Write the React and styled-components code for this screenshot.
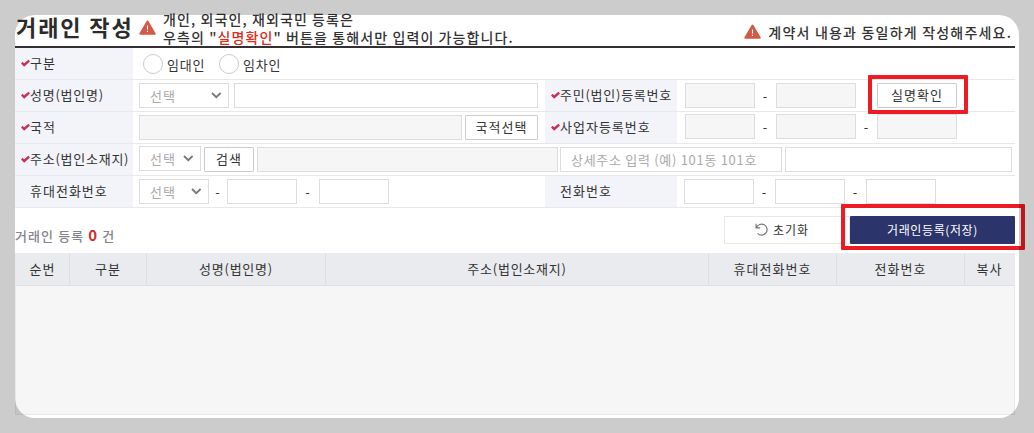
import React from "react";
import styled, { createGlobalStyle } from "styled-components";

const GlobalStyle = createGlobalStyle`
  * {
    box-sizing: border-box;
  }
  body {
    margin: 0;
    background: #fff;
    color: #333;
    font-family: "Noto Sans CJK KR", "Noto Sans", sans-serif;
    font-size: 13px;
    letter-spacing: 1px;
    overflow: hidden;
  }
  button, input {
    font: inherit;
    letter-spacing: inherit;
    color: inherit;
  }
`;

const Page = styled.div`
  position: relative;
  width: 1034px;
  height: 433px;
  padding: 0 19px 0 15px;
  overflow: hidden;
`;

const Header = styled.div`
  display: flex;
  height: 48px;
  border-bottom: 2px solid #332f33;
  white-space: nowrap;
`;

const Title = styled.h1`
  margin: 9px 0 0 1px;
  width: 123px;
  font-size: 22px;
  line-height: 34px;
  font-weight: 700;
  letter-spacing: 1.9px;
  color: #2b2b2b;
`;

const WarningMark = styled.svg`
  flex: none;
  width: 17px;
  height: 16px;
  margin-top: ${(props) => props.$top}px;
`;

const Notice = styled.div`
  margin: ${(props) => props.$top}px 0 0 7px;
  font-size: 14px;
  line-height: 18px;
  font-weight: 500;
  letter-spacing: ${(props) => props.$spacing}px;
`;

const RightNotice = styled.div`
  display: flex;
  margin-left: auto;
  padding-right: 3px;
`;

const Red = styled.span`
  color: #e02b20;
`;

const FormRow = styled.div`
  display: flex;
  height: 32px;
  border-bottom: 1px solid #e8e8ea;
`;

const Label = styled.div`
  flex: none;
  display: flex;
  align-items: center;
  width: ${(props) => props.$width || 118}px;
  padding-bottom: 2px;
  padding-left: ${(props) => (props.$required ? 6 : 15)}px;
  background: #f3f4f9;
  letter-spacing: ${(props) => (props.$tight ? 0.75 : 1)}px;
  white-space: nowrap;
`;

const CheckMark = styled.svg`
  width: 9px;
  height: 8px;
  flex: none;
`;

const Fields = styled.div`
  display: flex;
  align-items: flex-start;
  width: ${(props) => (props.$width ? `${props.$width}px` : "auto")};
  padding: ${(props) => props.$top || 3}px 0 0 ${(props) => props.$left || 6}px;
`;

const Input = styled.input`
  flex: none;
  width: ${(props) => props.$width}px;
  height: 25px;
  margin-left: ${(props) => props.$gap || 0}px;
  padding: 0 10px 1px;
  border: 1px solid #ddd;
  border-radius: 0;
  background: ${(props) => (props.readOnly ? "#f6f6f6" : "#fff")};
  letter-spacing: 0.7px;
  outline: none;
  &::placeholder {
    color: #aaa;
    opacity: 1;
  }
`;

const SelectBox = styled.div`
  flex: none;
  display: flex;
  align-items: center;
  justify-content: space-between;
  width: ${(props) => props.$width}px;
  height: 25px;
  padding: 0 6px 1px 10px;
  border: 1px solid #ddd;
  color: #aaa;
`;

const Button = styled.button`
  flex: none;
  width: ${(props) => props.$width}px;
  height: 25px;
  margin: ${(props) => props.$top || 0}px 0 0 ${(props) => props.$gap || 0}px;
  padding: 0 0 2px;
  border: 1px solid #ccc;
  border-radius: 1px;
  background: #fff;
`;

const Dash = styled.span`
  width: ${(props) => props.$width || 21}px;
  line-height: 26px;
  text-align: center;
`;

const Radio = styled.label`
  display: flex;
  align-items: center;
  width: 76px;
  height: 26px;
  padding-bottom: 2px;
  white-space: nowrap;
  letter-spacing: 0.8px;
  &::before {
    content: "";
    width: 18px;
    height: 18px;
    margin: 0 4px 0 0;
    border: 1px solid #ccc;
    border-radius: 50%;
  }
`;

const ListBar = styled.div`
  display: flex;
  height: 45px;
  padding-top: 8px;
`;

const Count = styled.div`
  margin-top: 8px;
  line-height: 22px;
  color: #85858d;
  font-weight: 500;
  letter-spacing: 1.1px;
  b {
    color: #d02c2c;
    font-size: 15px;
  }
`;

const ResetButton = styled.button`
  display: flex;
  align-items: center;
  justify-content: center;
  gap: 5px;
  width: 126px;
  height: 28px;
  margin-left: auto;
  padding: 0 10px 1px 0;
  border: 1px solid #e8e8e8;
  background: #fff;
  font-size: 12px;
`;

const SaveButton = styled.button`
  width: 165px;
  height: 28px;
  padding: 0 0 2px;
  border: 0;
  border-radius: 1px;
  background: #2b346b;
  color: #fff;
  font-size: 12px;
  letter-spacing: 0.6px;
`;

const Grid = styled.div`
  height: 162px;
  border: 1px solid #e8e9ec;
  border-top: 0;
  background: #f6f6f6;
`;

const GridHead = styled.div`
  display: grid;
  grid-template-columns: 54px 77px 179px 383px 128px 128px 49px;
  height: 33px;
  background: #e9ebef;
  border-bottom: 1px solid #dddfe5;
`;

const HeadCell = styled.div`
  display: flex;
  align-items: center;
  justify-content: center;
  padding-bottom: 1px;
  border-right: 1px solid #dddfe5;
  letter-spacing: ${(props) => (props.$tight ? 0.75 : 1)}px;
  &:last-child {
    border-right: 0;
  }
`;

const Highlight = styled.div`
  position: absolute;
  left: ${(props) => props.$x}px;
  top: ${(props) => props.$y}px;
  width: ${(props) => props.$width}px;
  height: ${(props) => props.$height}px;
  border: 4px solid #ed1c24;
  border-radius: 1px;
  pointer-events: none;
`;

// Dims everything around the rounded area
const Spotlight = styled.div`
  position: absolute;
  left: 15px;
  top: 15px;
  width: 1004px;
  height: 403px;
  border-radius: 20px;
  box-shadow: 0 0 0 60px rgba(0, 0, 0, 0.2);
  pointer-events: none;
`;

const columns = ["순번", "구분", "성명(법인명)", "주소(법인소재지)", "휴대전화번호", "전화번호", "복사"];

const Warning = ({ top }) => (
  <WarningMark $top={top} viewBox="0 0 17 16">
    <path d="M8.5 1.5 15.7 13.8H1.3Z" fill="#d15b47" stroke="#d15b47" strokeWidth="2" strokeLinejoin="round" />
    <path d="M8.5 5.5v4M8.5 10.7v1.3" stroke="#fff" strokeWidth="1.1" />
  </WarningMark>
);

const FieldLabel = ({ required, tight, width, children }) => (
  <Label $required={required} $tight={tight} $width={width}>
    {required && (
      <CheckMark viewBox="0 0 9 8">
        <path d="M.8 3.6 3.2 6 8.2 1.6" fill="none" stroke="#cf2c57" strokeWidth="2.4" />
      </CheckMark>
    )}
    {children}
  </Label>
);

const Select = ({ width }) => (
  <SelectBox $width={width}>
    선택
    <svg width="11" height="7" viewBox="0 0 11 7">
      <path d="M1 1 5.3 5.2 9.6 1" fill="none" stroke="#777" strokeWidth="1.8" />
    </svg>
  </SelectBox>
);

const App = () => {
  return (
    <Page>
      <GlobalStyle />
      <Header>
        <Title>거래인 작성</Title>
        <Warning top={20} />
        <Notice $top={10} $spacing={1.1}>
          개인, 외국인, 재외국민 등록은
          <br />
          우측의 "<Red>실명확인</Red>" 버튼을 통해서만 입력이 가능합니다.
        </Notice>
        <RightNotice>
          <Warning top={24} />
          <Notice $top={23} $spacing={1.2}>계약서 내용과 동일하게 작성해주세요.</Notice>
        </RightNotice>
      </Header>

      <FormRow>
        <FieldLabel required>구분</FieldLabel>
        <Fields $left={10} $top={4}>
          <Radio>임대인</Radio>
          <Radio>임차인</Radio>
        </Fields>
      </FormRow>
      <FormRow>
        <FieldLabel required tight>성명(법인명)</FieldLabel>
        <Fields $width={412}>
          <Select width={90} />
          <Input $width={304} $gap={5} />
        </Fields>
        <FieldLabel required tight width={132}>주민(법인)등록번호</FieldLabel>
        <Fields $left={8}>
          <Input $width={70} readOnly />
          <Dash>-</Dash>
          <Input $width={80} readOnly />
          <Button $width={80} $gap={21}>실명확인</Button>
        </Fields>
      </FormRow>
      <FormRow>
        <FieldLabel required>국적</FieldLabel>
        <Fields $width={412}>
          <Input $width={323} readOnly />
          <Button $width={73} $gap={3}>국적선택</Button>
        </Fields>
        <FieldLabel required width={132}>사업자등록번호</FieldLabel>
        <Fields $left={8} $top={2}>
          <Input $width={70} readOnly />
          <Dash>-</Dash>
          <Input $width={80} readOnly />
          <Dash>-</Dash>
          <Input $width={80} readOnly />
        </Fields>
      </FormRow>
      <FormRow>
        <FieldLabel required tight>주소(법인소재지)</FieldLabel>
        <Fields $top={2}>
          <Select width={62} />
          <Button $width={50} $gap={3} $top={1}>검색</Button>
        </Fields>
        <Fields $left={3}>
          <Input $width={301} readOnly />
          <Input $width={222} $gap={2} placeholder="상세주소 입력 (예) 101동 101호" />
          <Input $width={227} $gap={3} />
        </Fields>
      </FormRow>
      <FormRow>
        <FieldLabel>휴대전화번호</FieldLabel>
        <Fields $width={412}>
          <Select width={70} />
          <Dash $width={18}>-</Dash>
          <Input $width={70} />
          <Dash $width={22}>-</Dash>
          <Input $width={70} />
        </Fields>
        <FieldLabel width={132}>전화번호</FieldLabel>
        <Fields $left={7}>
          <Input $width={70} />
          <Dash>-</Dash>
          <Input $width={70} />
          <Dash>-</Dash>
          <Input $width={70} />
        </Fields>
      </FormRow>

      <ListBar>
        <Count>
          거래인 등록 <b>0</b> 건
        </Count>
        <ResetButton>
          <svg width="13" height="13" viewBox="0 0 13 13" fill="none" stroke="#777" strokeWidth="1.2">
            <path d="M1.1 .8v4.1h4.1M1.4 4.7A5.5 5.5 0 1 1 2.6 10.4" />
          </svg>
          초기화
        </ResetButton>
        <SaveButton>거래인등록(저장)</SaveButton>
      </ListBar>

      <Grid>
        <GridHead>
          {columns.map((name, i) => (
            <HeadCell key={i} $tight={name.includes("(")}>{name}</HeadCell>
          ))}
        </GridHead>
      </Grid>

      <Highlight $x={868} $y={75} $width={100} $height={39} />
      <Highlight $x={841} $y={204} $width={184} $height={46} />
      <Spotlight />
    </Page>
  );
};

export default App;
